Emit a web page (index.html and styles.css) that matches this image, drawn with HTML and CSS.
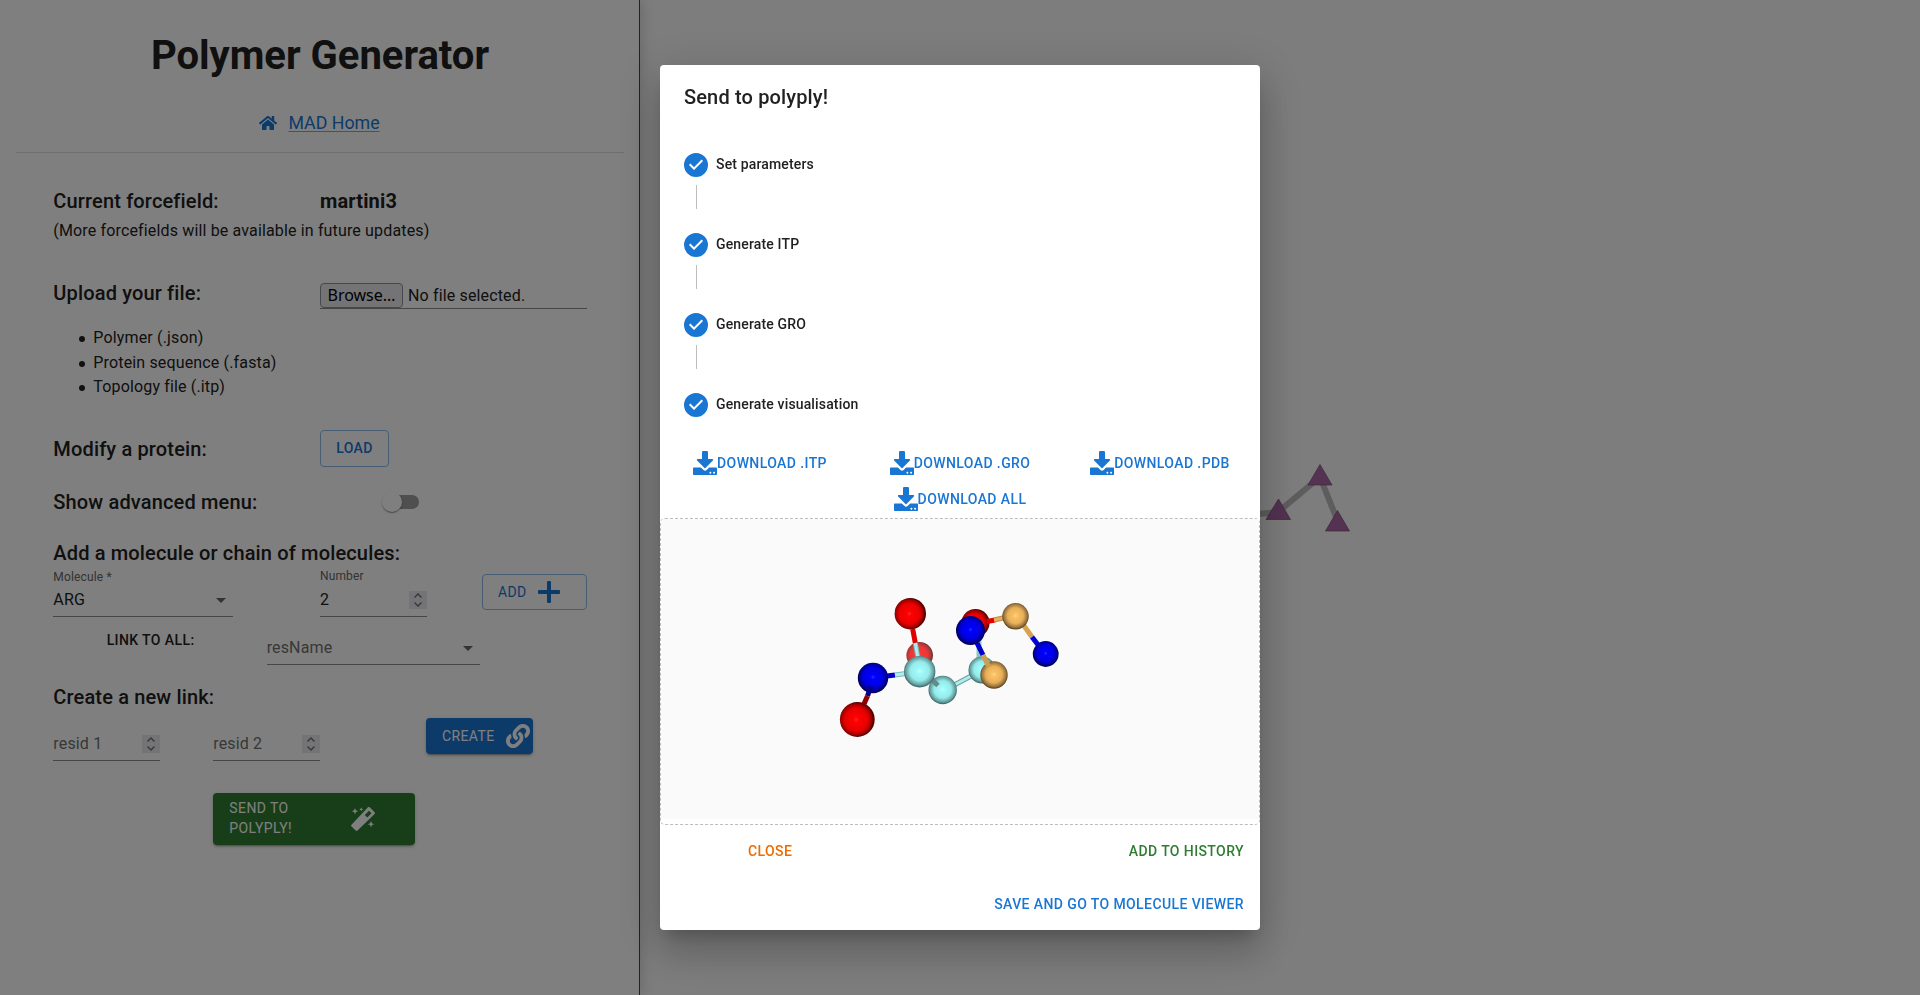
FILE: index.html
```html
<!DOCTYPE html>
<html lang="en">
<head>
<meta charset="utf-8">
<title>Polymer Generator</title>
<link rel="stylesheet" href="styles.css">
</head>
<body>
<svg class="defs" width="0" height="0">
  <defs>
    <symbol id="download" viewBox="0 0 24 24"><path d="M9 1.2Q9 0 10.100 0h3.800Q15 0 15 1.200V8h4.300c.8 0 1.200.9.600 1.500l-7.400 7.500c-.3.300-.7.300-1 0L4.100 9.500C3.500 8.900 3.900 8 4.700 8H9zM1 16.500h6.900l2.600 2.500c.9.900 2.200.9 3.100 0l2.500-2.500H23c.6 0 1 .4 1 1V23c0 .6-.4 1-1 1H1c-.6 0-1-.4-1-1v-5.500c0-.6.4-1 1-1zM17.400 20.800a.9.900 0 1 0 .01 0zM21.100 20.800a.9.900 0 1 0 .01 0z" fill-rule="evenodd"/></symbol>
    <symbol id="done" viewBox="0 0 24 24"><path d="M12 0a12 12 0 1 0 0 24 12 12 0 0 0 0-24zm-2 17-5-5 1.400-1.400 3.600 3.600 7.600-7.600L19 8l-9 9z"/></symbol>
    <symbol id="spin" viewBox="0 0 18 18"><path d="M5.500 6.500 9 3l3.500 3.500M5.500 11.500 9 15l3.500-3.500" fill="none" stroke="#6a6a6e" stroke-width="1.300"/></symbol>
    <radialGradient id="red" cx=".47" cy=".5"><stop offset="0" stop-color="#ff2a2a"/><stop offset=".15" stop-color="#f00"/><stop offset=".65" stop-color="#e80000"/><stop offset=".9" stop-color="#990000"/><stop offset="1" stop-color="#500000"/></radialGradient>
    <radialGradient id="blue" cx=".5" cy=".47"><stop offset="0" stop-color="#3030ff"/><stop offset=".15" stop-color="#00f"/><stop offset=".65" stop-color="#0000df"/><stop offset=".9" stop-color="#000090"/><stop offset="1" stop-color="#000050"/></radialGradient>
    <radialGradient id="cyan" cx=".5" cy=".48"><stop offset="0" stop-color="#c4ffff"/><stop offset=".15" stop-color="#a0fbfb"/><stop offset=".6" stop-color="#96eaea"/><stop offset=".9" stop-color="#629c9c"/><stop offset="1" stop-color="#426c6c"/></radialGradient>
    <radialGradient id="gold" cx=".5" cy=".48"><stop offset="0" stop-color="#ffd794"/><stop offset=".15" stop-color="#fcc163"/><stop offset=".6" stop-color="#e7af5a"/><stop offset=".9" stop-color="#94703a"/><stop offset="1" stop-color="#5d4625"/></radialGradient>
  </defs>
</svg>

<div class="app">
  <aside class="panel">
    <h1 class="title">Polymer Generator</h1>
    <div class="home">
      <svg class="home-icon" viewBox="0 0 576 512"><path d="M280 148 96 300v164c0 9 7 16 16 16h112c9 0 16-7 16-16v-96c0-9 7-16 16-16h64c9 0 16 7 16 16v96c0 9 7 16 16 16h112c9 0 16-7 16-16V300L296 148c-5-4-11-4-16 0zm292 103-84-69V44c0-7-5-12-12-12h-56c-7 0-12 5-12 12v72l-89-74c-18-15-43-15-61 0L4 251c-5 4-6 12-2 17l26 31c4 5 12 6 17 2L280 107c5-4 11-4 16 0l235 194c5 4 13 3 17-2l26-31c4-5 3-13-2-17z"/></svg>
      <a class="home-link">MAD Home</a>
    </div>
    <hr class="rule">

    <section class="row row-force">
      <h2 class="heading c-left">Current forcefield:</h2>
      <b class="heading strong c-right">martini3</b>
      <p class="text c-wide">(More forcefields will be available in future updates)</p>
    </section>

    <section class="row row-upload">
      <h2 class="heading c-left">Upload your file:</h2>
      <div class="file c-file"><span class="browse">Browse…</span><span class="no-file">No file selected.</span></div>
      <ul class="formats c-wide"><li>Polymer (.json)</li><li>Protein sequence (.fasta)</li><li>Topology file (.itp)</li></ul>
    </section>

    <section class="row row-modify">
      <h2 class="heading c-left">Modify a protein:</h2>
      <span class="btn outlined c-load">LOAD</span>
    </section>

    <section class="row row-advanced">
      <h2 class="heading c-left">Show advanced menu:</h2>
      <span class="switch c-switch"><span class="thumb"></span></span>
    </section>

    <h2 class="heading add-heading">Add a molecule or chain of molecules:</h2>
    <section class="row row-add">
      <div class="field c-molecule"><span class="label label-low">Molecule *</span><div class="value">ARG<i class="caret"></i></div></div>
      <div class="field c-number"><span class="label">Number</span><div class="value num">2<svg class="spin"><use href="#spin"/></svg></div></div>
      <span class="btn outlined light add-btn c-add">ADD<svg class="plus" viewBox="0 0 22 22"><path d="M9 1q0-1 1-1h2q1 0 1 1v8h8q1 0 1 1v2q0 1-1 1h-8v8q0 1-1 1h-2q-1 0-1-1v-8H1q-1 0-1-1v-2q0-1 1-1h8z"/></svg></span>
    </section>
    <section class="row row-link">
      <span class="link-label c-linklabel">LINK TO ALL:</span>
      <div class="value muted c-resname">resName<i class="caret"></i></div>
    </section>

    <h2 class="heading create-heading">Create a new link:</h2>
    <section class="row row-create">
      <div class="value muted num c-res1">resid 1<svg class="spin"><use href="#spin"/></svg></div>
      <div class="value muted num c-res2">resid 2<svg class="spin"><use href="#spin"/></svg></div>
      <span class="btn filled c-create">CREATE<svg class="link-icon" viewBox="0 0 512 512"><path d="M327 185c60 60 59 156 0 215l-68 68c-59 59-155 59-215 0s-59-155 0-215l37-37c10-10 27-3 28 11 1 18 4 36 10 53 2 6 1 13-4 17l-13 13c-28 28-29 74-1 102 28 29 74 29 103 1l67-67c28-28 28-74 0-102-4-4-8-7-11-9-5-3-8-8-8-14 0-11 3-21 12-30l21-21c5-5 14-6 20-2 8 5 15 11 22 17zM468 44c-60-59-156-59-215 0l-68 68c-59 59-60 155 0 215 7 6 14 12 22 17 6 4 15 3 20-2l21-21c9-9 12-19 12-30 0-6-3-11-8-14-3-2-7-5-11-9-28-28-28-74 0-102l67-67c29-28 75-28 103 1 28 28 27 74-1 102l-13 13c-5 4-6 11-4 17 6 17 9 35 10 53 1 14 18 21 28 11l37-37c59-60 59-156 0-215z"/></svg></span>
    </section>
    <div class="row row-send">
      <span class="btn filled green c-send"><span class="send-text">SEND TO POLYPLY!</span><svg class="wand" viewBox="0 0 24 24"><path d="M16.900.3q.9-.7 1.800 0l4.900 4.900q.8.900 0 1.800L6.500 23.600q-.9.800-1.800 0L.5 19.500q-.8-.9 0-1.800zM18 3.700l-4.200 4.400 2.500 2.400 4.200-4.300zM4 1l.9 2.300L7.200 4.200 4.900 5.100 4 7.400l-.9-2.300L.8 4.200l2.300-.9zM10.200.300l.600 1.400 1.400.6-1.400.6-.6 1.400-.6-1.400-1.400-.6 1.400-.6zM20 14l.9 2.300 2.300.9-2.300.9-.9 2.300-.9-2.300-2.300-.9 2.300-.9z" fill-rule="evenodd"/></svg></span>
    </div>
  </aside>

  <main class="graph">
    <svg width="1279" height="995" viewBox="640 0 1279 995">
      <path d="M1230 517 1278 512 1320 477 1338 522" fill="none" stroke="#bbb" stroke-width="6"/>
      <g fill="#a964a3" stroke="#7e4b7a" stroke-width=".7"><path d="M1278.500 499l12 20.500h-24.500zM1320 464.500l12 20.500h-24zM1337.500 510.500l12 20.500h-24z"/></g>
    </svg>
  </main>
</div>

<div class="backdrop">
  <div class="dialog">
    <h2 class="dialog-title">Send to polyply!</h2>
    <div class="stepper">
      <div class="step"><svg class="step-icon"><use href="#done"/></svg><span class="step-label">Set parameters</span></div>
      <div class="connector"></div>
      <div class="step"><svg class="step-icon"><use href="#done"/></svg><span class="step-label">Generate ITP</span></div>
      <div class="connector"></div>
      <div class="step"><svg class="step-icon"><use href="#done"/></svg><span class="step-label">Generate GRO</span></div>
      <div class="connector"></div>
      <div class="step"><svg class="step-icon"><use href="#done"/></svg><span class="step-label">Generate visualisation</span></div>
    </div>
    <div class="downloads">
      <span class="dl"><svg><use href="#download"/></svg>DOWNLOAD .ITP</span>
      <span class="dl"><svg><use href="#download"/></svg>DOWNLOAD .GRO</span>
      <span class="dl"><svg><use href="#download"/></svg>DOWNLOAD .PDB</span>
    </div>
    <div class="download-all"><span class="dl"><svg><use href="#download"/></svg>DOWNLOAD ALL</span></div>
    <div class="viewer">
      <svg class="scene" viewBox="661 519 598 300">
        <g stroke-width="5" fill="none">
          <circle cx="919.700" cy="655.300" r="13.300" fill="url(#red)" opacity=".78"/>
          <path d="M979 640v20" stroke="#8dc5c5"/>
          <path d="M943 691 973 675" stroke="#6f9f9f" stroke-width="5"/><path d="M943 691 973 675" stroke="#a9eeee" stroke-width="3"/>
          <circle cx="982" cy="670" r="13.500" fill="url(#cyan)"/>
          <circle cx="975.500" cy="623" r="14" fill="url(#red)"/>
          <path d="M987 621.500 995 620" stroke="#e00000"/><path d="M994 620 1004 617.800" stroke="#b58b4a"/><path d="M994 620 1004 617.800" stroke="#e9b05a" stroke-width="3"/>
          <path d="M1022 623 1032 637" stroke="#d8a24f"/><path d="M1032 637 1042 650" stroke="#0000d8"/>
          <circle cx="1015.500" cy="616.300" r="13.200" fill="url(#gold)"/><circle cx="1045.700" cy="654" r="12.900" fill="url(#blue)"/>
          <circle cx="994" cy="675" r="13.700" fill="url(#gold)"/>
          <path d="M977 643 983 655" stroke="#0000d0"/><path d="M983 655 989 667" stroke="#cd9d50"/>
          <circle cx="970.500" cy="630.500" r="14.500" fill="url(#blue)"/>
          <circle cx="942.700" cy="690" r="14.200" fill="url(#cyan)"/>
          <path d="M929 677 938 685.500" stroke="#638b8b" stroke-width="5"/>
          <path d="M912.700 629 915.300 643" stroke="#e00000"/><path d="M915.300 643 918 658" stroke="#7fb5b5"/><path d="M915.300 643 918 658" stroke="#a9f0f0" stroke-width="3"/>
          <path d="M887 676 895 675" stroke="#0000c8"/><path d="M895 675 906 673.500" stroke="#7fb5b5"/><path d="M895 675 906 673.500" stroke="#a9f0f0" stroke-width="3"/>
          <circle cx="919.700" cy="671.700" r="15.700" fill="url(#cyan)"/><circle cx="910.300" cy="613.700" r="15.700" fill="url(#red)"/>
          <circle cx="873" cy="678" r="15.200" fill="url(#blue)"/>
          <path d="M871 686 867.500 696" stroke="#000088"/><path d="M867.500 696 864 704" stroke="#900000"/>
          <circle cx="857.300" cy="719.500" r="17.400" fill="url(#red)"/>
        </g>
      </svg>
    </div>
    <div class="actions"><span class="act orange">CLOSE</span><span class="act green-text">ADD TO HISTORY</span></div>
    <div class="actions-last"><span class="act">SAVE AND GO TO MOLECULE VIEWER</span></div>
  </div>
</div>
</body>
</html>
```
FILE: styles.css
```css
* { box-sizing: border-box; }
body { margin: 0; font: 400 16px/24px Roboto, sans-serif; letter-spacing: .15px; color: #212121; background: #fff; overflow: hidden; }
h1, h2, p, ul, hr { margin: 0; }
.defs { position: absolute; }
.app { display: flex; height: 995px; }
.panel { position: relative; width: 640px; flex: none; border-right: 1px solid #444; box-shadow: 0 0 14px #0003; }
.graph { flex: 1; background: #fafafa; }
.graph svg { display: block; }

.title { margin-top: 32px; padding-left: 1px; font-size: 40px; line-height: 48px; font-weight: 700; letter-spacing: 0; text-align: center; }
.home { display: flex; justify-content: center; align-items: center; margin-top: 30px; height: 26px; font-size: 17.800px; letter-spacing: 0; color: #1976d2; }
.home-icon { width: 18px; height: 16px; margin-right: 11px; fill: #1976d2; }
.home-link { text-decoration: underline; text-decoration-color: #1976d299; text-underline-offset: 2px; text-decoration-thickness: 1px; }
.rule { margin: 16px 15px 0 16px; border: 0; border-top: 1px solid #dedede; }

.row { display: grid; grid-template-columns: repeat(12, 53.333px); align-items: start; }
.heading { font-size: 20px; line-height: 32px; font-weight: 500; letter-spacing: .15px; }
.strong { font-weight: 700; }
.c-left { grid-column: 2 / 7; }
.c-right { grid-column: 7 / 12; }
.c-wide { grid-column: 2 / 12; }
.row-force { margin-top: 32px; }
.text { line-height: 24px; margin-top: 2px; }
.row-upload { margin-top: 34px; }
.c-file { grid-column: 7 / 12; }
.file { display: flex; align-items: center; gap: 5px; margin-top: 6px; height: 26px; border-bottom: 1px solid #8c8c8c; padding-bottom: 1px; }
.browse { width: 83px; height: 25px; line-height: 23px; text-align: center; border: 1px solid #8f8f9d; border-radius: 4px; background: #e9e9ed; color: #000; font-family: "Noto Sans", sans-serif; letter-spacing: 0; }
.no-file { padding-top: 1px; }
.formats { margin-top: 17px; padding-left: 40px; line-height: 24.500px; list-style: none; }
.formats li::before { content: ""; float: left; width: 6px; height: 6px; margin: 10px 0 0 -14px; border-radius: 50%; background: #212121; }
.row-modify { margin-top: 30.500px; }
.row-modify .heading { margin-top: 3px; }
.btn { display: flex; align-items: center; justify-content: center; height: 36.500px; border-radius: 4px; font-size: 14px; line-height: 20px; font-weight: 500; letter-spacing: .4px; color: #1976d2; }
.outlined { border: 1px solid #8cbae8; }
.c-load { grid-column: 7; width: 69px; }
.row-advanced { margin-top: 19px; }
.c-switch { grid-column: 8; }
.switch { display: block; position: relative; width: 34px; height: 14px; margin: 9px 0 0 12px; border-radius: 7px; background: #9e9e9e; }
.thumb { position: absolute; left: -3px; top: -3px; width: 20px; height: 20px; border-radius: 50%; background: #fff; box-shadow: 0 2px 1px -1px #0003, 0 1px 1px #0003, 0 1px 3px #0002; }

.add-heading { margin: 19px 0 0 53.300px; }
.row-add { margin-top: -3px; }
.c-molecule { grid-column: 2 / 6; width: 180px; }
.c-number { grid-column: 7 / 9; }
.label { display: block; height: 20px; font-size: 12px; line-height: 20px; color: #666; }
.label-low { line-height: 22px; }
.value { display: flex; align-items: center; justify-content: space-between; height: 31px; padding-bottom: 1px; border-bottom: 1px solid #8c8c8c; letter-spacing: .15px; }
.value.muted { color: #707070; }
.caret { margin-right: 7px; border: 5px solid transparent; border-top-color: #666; border-bottom: 0; }
.spin { width: 18px; height: 18px; background: #e9e9ed; }
.c-add { grid-column: 10 / 12; width: 105px; margin: 8px 0 0 2px; }
.light { font-weight: 400; }
.add-btn { justify-content: flex-start; padding-left: 15px; }
.plus { width: 22px; height: 22px; margin-left: 11px; fill: #1976d2; }
.row-link { margin-top: 13px; }
.link-label { grid-column: 3 / 6; font-size: 14px; line-height: 20px; font-weight: 500; letter-spacing: .4px; white-space: nowrap; }
.c-resname { grid-column: 6 / 10; margin-top: 4px; }

.create-heading { margin: 16px 0 0 53.300px; }
.row-create { margin-top: 5px; }
.c-res1 { grid-column: 2 / 4; margin-top: 12px; }
.c-res2 { grid-column: 5 / 7; margin-top: 12px; }
.c-create { grid-column: 9 / 11; margin-left: -.660px; }
.filled { justify-content: flex-start; padding-left: 16px; font-weight: 400; color: #fff; background: #1976d2; box-shadow: 0 3px 1px -2px #0003, 0 2px 2px #0002, 0 1px 5px #0002; }
.link-icon { width: 24px; height: 24px; margin-left: 11px; fill: #fff; }
.row-send { margin-top: 32px; }
.filled.green { background: #2e7d32; }
.c-send { grid-column: 5 / 9; width: 202px; height: 52px; }
.send-text { width: 70px; margin-top: -1px; }
.wand { width: 24px; height: 24px; margin-left: 52px; fill: #fff; }

.backdrop { position: fixed; inset: 0; display: flex; align-items: center; justify-content: center; background: rgba(0, 0, 0, .5); }
.dialog { width: 600px; height: 865px; border-radius: 4px; background: #fff; box-shadow: 0 11px 15px -7px #0003, 0 24px 38px 3px #00000024, 0 9px 46px 8px #0000001f; }
.dialog-title { padding: 16px 24px; font-size: 20px; line-height: 32px; font-weight: 500; letter-spacing: .15px; }
.stepper { padding: 16px 24px 0; }
.step { display: flex; align-items: center; gap: 8px; height: 40px; font-size: 14px; line-height: 20px; font-weight: 500; letter-spacing: .15px; }
.step-label { padding-bottom: 2px; }
.step-icon { width: 24px; height: 24px; fill: #1976d2; }
.connector { height: 24px; margin: 0 0 16px 12px; border-left: 1px solid #bdbdbd; }
.downloads, .download-all { display: grid; grid-template-columns: repeat(3, 200px); justify-items: center; }
.downloads { margin-top: 20px; height: 36px; }
.download-all { height: 37px; }
.download-all .dl { grid-column: 2; }
.dl { display: flex; height: 36px; align-items: center; font-size: 14px; font-weight: 500; line-height: 20px; letter-spacing: .4px; color: #1976d2; white-space: nowrap; }
.dl svg { width: 24px; height: 24px; fill: #1976d2; }
.viewer { height: 307px; border: 1px dashed #bdbdbd; border-radius: 5px; overflow: hidden; }
.scene { display: block; width: 598px; height: 300px; background: #fafafa; }
.actions, .actions-last { display: flex; font-size: 14px; line-height: 20px; font-weight: 500; letter-spacing: .4px; color: #1976d2; }
.actions { justify-content: space-between; padding: 16px 16px 0 88px; }
.actions-last { justify-content: flex-end; padding: 33px 16px 0; }
.orange { color: #ed6c02; }
.green-text { color: #2e7d32; }
```
